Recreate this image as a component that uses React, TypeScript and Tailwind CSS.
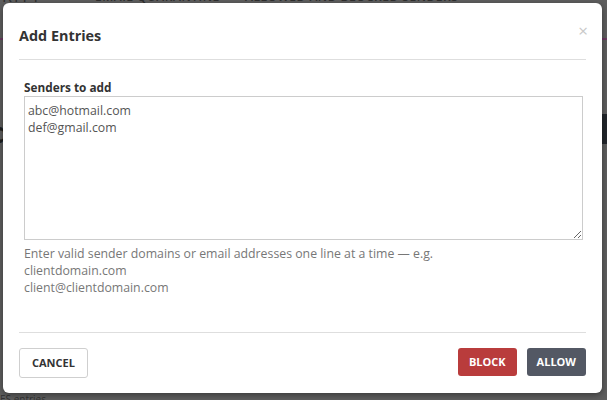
import React from "react";

export default function App() {
  return (
    <div
      className="relative w-[607px] h-[400px] overflow-hidden bg-[#5e5e5e]"
      style={{ fontFamily: '"Open Sans", "Liberation Sans", sans-serif' }}
    >
      {/* dimmed page behind the modal */}
      <div className="flex flex-col h-full">
        <div className="-mt-[11px] h-[15px] flex items-start text-[#2f2f2f] leading-[15px]">
          <span className="w-[95px] pl-[2px] text-[16px] tracking-[2px]">RITY</span>
          <span className="w-[150px] text-[12px] font-semibold tracking-[0.5px]">EMAIL QUARANTINE</span>
          <span className="text-[12px] font-semibold tracking-[0.5px]">ALLOWED AND BLOCKED SENDERS</span>
        </div>
        <div className="mt-[34px] h-[2px] bg-[#6a3a60]" />
        <div className="mt-[74px] flex justify-between items-start">
          <span className="text-[28px] leading-[36px] text-[#1e1e1e] font-bold -ml-[8px]">d</span>
          <div className="w-[10px] h-[30px] bg-[#22262b]" />
        </div>
        <div className="mt-auto -mb-[4px] text-[10px] leading-[10px] text-[#333]">ES entries</div>
      </div>

      {/* modal overlay */}
      <div className="absolute inset-0 pl-[3px] pr-[5px] pt-[3px] pb-[7px]">
        <div className="relative h-full bg-white rounded-[6px] shadow-[0_2px_6px_rgba(0,0,0,0.4)] flex flex-col">
          <button className="absolute right-[14px] top-[19px] text-[#c8c8c8] text-[17px] leading-[17px]">
            ×
          </button>
          <div className="mx-4 pt-[22px] pb-[12px] border-b border-[#dedede]">
            <h4 className="text-[14.4px] leading-[22px] font-bold text-[#333]">Add Entries</h4>
          </div>
          <div className="px-[21px] pt-[19px] flex-1">
            <label className="block text-[11.8px] leading-[17px] font-bold text-[#333]">Senders to add</label>
            <textarea
              className="block w-[559px] h-[144px] border border-[#cccccc] px-[3px] pt-[5px] pb-[3px] text-[12.3px] leading-[17px] text-[#555] outline-none"
              style={{ fontFamily: '"Open Sans", "Liberation Sans", sans-serif', resize: "vertical" }}
              defaultValue={"abc@hotmail.com\ndef@gmail.com"}
            />
            <p className="mt-[5px] text-[12.3px] leading-[17px] text-[#777]">
              Enter valid sender domains or email addresses one line at a time — e.g.
              <br />
              clientdomain.com
              <br />
              client@clientdomain.com
            </p>
          </div>
          <div className="mx-4 border-t border-[#dedede] pt-[15px] pb-[15px] flex items-start">
            <button className="h-[30px] px-[12px] rounded-[3px] border border-[#cfcfcf] bg-white text-[11px] font-bold text-[#333]">
              CANCEL
            </button>
            <div className="ml-auto flex gap-[10px]">
              <button className="h-[28px] px-[11px] rounded-[3px] bg-[#b93c3c] text-white text-[11px] font-bold">
                BLOCK
              </button>
              <button className="h-[28px] px-[10px] rounded-[3px] bg-[#535864] text-white text-[11px] font-bold">
                ALLOW
              </button>
            </div>
          </div>
        </div>
      </div>
    </div>
  );
}
